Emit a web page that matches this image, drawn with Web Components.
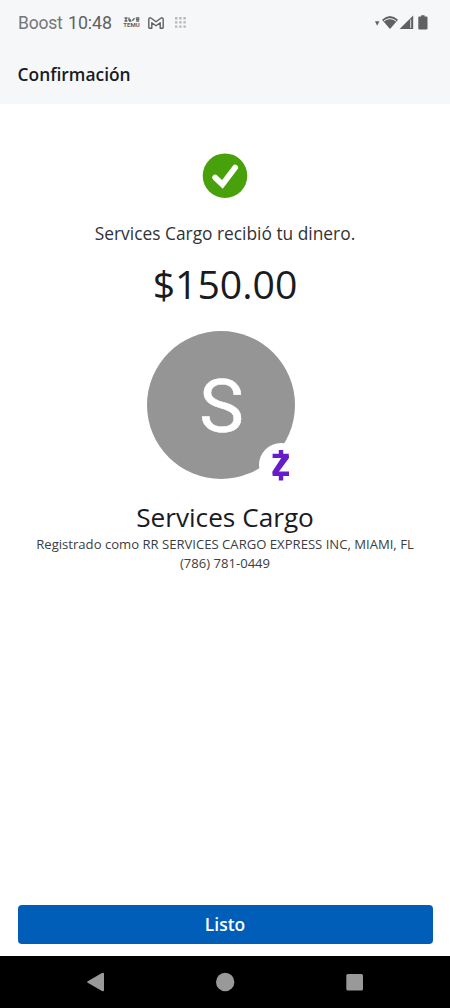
<!DOCTYPE html>
<html lang="es">
<head>
<meta charset="UTF-8">
<meta name="viewport" content="width=device-width, initial-scale=1.0">
<title>Confirmación</title>
<style>
    body {
        margin: 0;
        background: #FFFFFF;
        font-family: "Open Sans", "Noto Sans", sans-serif;
        color: #1A1B1F;
    }
</style>
</head>
<body>
<confirmation-screen></confirmation-screen>

<script>
class StatusBar extends HTMLElement {
    constructor() {
        super();
        this.attachShadow({ mode: 'open' });
    }

    connectedCallback() {
        this.shadowRoot.innerHTML = `
        <style>
            :host {
                display: flex;
                justify-content: space-between;
                align-items: center;
                height: 45px;
                padding: 0 21px 0 18px;
                box-sizing: border-box;
                color: #5F6163;
                font-family: Roboto, sans-serif;
            }
            .left, .right {
                display: flex;
                align-items: center;
            }
            .carrier {
                width: 45px;
                font-size: 17.5px;
                line-height: 22px;
                color: #747678;
                letter-spacing: -0.2px;
            }
            .time {
                width: 44px;
                font-size: 17.8px;
                line-height: 22px;
                margin-left: 5px;
                letter-spacing: -0.1px;
            }
            .temu {
                display: flex;
                flex-direction: column;
                align-items: center;
                width: 17px;
                margin-left: 11px;
            }
            .temu span {
                font-size: 6px;
                line-height: 6px;
                font-weight: 700;
            }
            svg {
                display: block;
                flex-shrink: 0;
            }
            .mail {
                margin-left: 8px;
            }
            .dots {
                margin-left: 11px;
            }
        </style>
        <div class="left">
            <span class="carrier">${this.getAttribute('carrier')}</span>
            <span class="time">${this.getAttribute('time')}</span>
            <div class="temu">
                <svg width="16" height="5" viewBox="0 0 16 5" fill="none" stroke="currentColor" stroke-width="1.3"><path d="M0.5 1h3M2 1v3M.4 4h3M5 .5v2.5h2M5 4.2h2.4M8.2 3.8 10.6 1.2M11.8 1h3.6M12 2.6h3.3M12.2 4.2h3"></path></svg>
                <span>TEMU</span>
            </div>
            <svg class="mail" width="16" height="12" viewBox="0 0 16 12" fill="none" stroke="currentColor" stroke-width="1.4" stroke-linejoin="round"><path d="M.8 10.6V2.2C.8.7 2.3.4 3.3 1.2L8 4.7l4.7-3.5c1-.8 2.5-.5 2.5 1v8.4q0 .7-.7.7h-2.3V5.7L8 8.8 3.8 5.7v5.6H1.5q-.7 0-.7-.7z"></path></svg>
            <svg class="dots" width="11" height="11" viewBox="0 0 11 11" fill="#B7B8BA"><path d="M0 0h2.4v2.4H0zM4.2 0h2.4v2.4H4.2zM8.4 0h2.4v2.4H8.4zM0 4.2h2.4v2.4H0zM4.2 4.2h2.4v2.4H4.2zM8.4 4.2h2.4v2.4H8.4zM0 8.4h2.4v2.4H0zM4.2 8.4h2.4v2.4H4.2zM8.4 8.4h2.4v2.4H8.4z"></path></svg>
        </div>
        <div class="right">
            <svg width="54" height="16" viewBox="0 0 54 16" fill="currentColor">
                <path d="M0 6.2h4.4L2.2 10.8z"></path>
                <path d="M7 4.7Q15 -2.7 23 4.7L15 14z"></path>
                <path d="M8.8 6.1Q15 1.2 21.2 6.1" fill="none" stroke="#F6F7F9" stroke-width="1"></path>
                <path d="M24.6 14 38.2 .6V14z"></path>
                <path d="M35.6 4.6V13" stroke="#C9CBCC" stroke-width="1.2"></path>
                <path d="M46.2.2h3.4V1.6h1.9q1 0 1 1v10.8q0 1-1 1h-7.2q-1 0-1-1V2.6q0-1 1-1h1.9z"></path>
            </svg>
        </div>
        `;
    }
}

class PageHeader extends HTMLElement {
    constructor() {
        super();
        this.attachShadow({ mode: 'open' });
    }

    connectedCallback() {
        this.shadowRoot.innerHTML = `
        <style>
            :host {
                display: block;
                height: 59px;
                padding: 17px 17.5px 0;
                box-sizing: border-box;
                font-size: 17.4px;
                line-height: 24px;
                font-weight: 600;
            }
        </style>
        <slot></slot>
        `;
    }
}

class SuccessIcon extends HTMLElement {
    constructor() {
        super();
        this.attachShadow({ mode: 'open' });
    }

    connectedCallback() {
        this.shadowRoot.innerHTML = `
        <style>
            :host {
                display: block;
                width: 46px;
                height: 46px;
            }
            svg {
                display: block;
            }
        </style>
        <svg width="46" height="46" viewBox="0 0 46 46" fill="none">
            <circle cx="23" cy="22.7" r="22.3" fill="#48A10B"></circle>
            <path d="M13.2 24.6 20.4 31.4 33.2 14.6" stroke="#FFFFFF" stroke-width="5.8" stroke-linecap="round" stroke-linejoin="miter"></path>
        </svg>
        `;
    }
}

class ContactAvatar extends HTMLElement {
    constructor() {
        super();
        this.attachShadow({ mode: 'open' });
    }

    connectedCallback() {
        this.shadowRoot.innerHTML = `
        <style>
            :host {
                display: block;
                position: relative;
                width: 148px;
                height: 148px;
            }
            .circle {
                display: flex;
                align-items: center;
                justify-content: center;
                width: 100%;
                height: 100%;
                padding: 2px 0 0 2px;
                box-sizing: border-box;
                border-radius: 50%;
                background: #959595;
                color: #FFFFFF;
                font-family: Roboto, sans-serif;
                font-size: 75px;
                line-height: 88px;
                -webkit-text-stroke: 0.6px #FFFFFF;
            }
            /* Zelle badge overlaps the lower right edge */
            .badge {
                position: absolute;
                right: -8px;
                bottom: -8px;
                width: 44px;
                height: 44px;
                border-radius: 50%;
                background: #FFFFFF;
            }
            svg {
                display: block;
            }
        </style>
        <div class="circle"><slot></slot></div>
        <div class="badge">
            <svg width="44" height="44" viewBox="0 0 44 44" fill="none" stroke="#671CC9" stroke-width="4.4">
                <path d="M13.6 12.9H29.8M13.6 30.7H30M22 7V13M22 30.7V37.6"></path>
                <path d="M23.6 12.9H29.8V15.2L19.8 28.7V30.9H13.6V28.3z" fill="#671CC9" stroke="none"></path>
            </svg>
        </div>
        `;
    }
}

class PaymentSummary extends HTMLElement {
    constructor() {
        super();
        this.attachShadow({ mode: 'open' });
    }

    connectedCallback() {
        this.shadowRoot.innerHTML = `
        <style>
            :host {
                display: flex;
                flex-direction: column;
                align-items: center;
                flex: 1;
                padding-top: 49px;
                text-align: center;
            }
            .message {
                margin-top: 22px;
                font-size: 17.35px;
                line-height: 24px;
                color: #303236;
            }
            .amount {
                margin-top: 12px;
                font-size: 39.2px;
                line-height: 54px;
            }
            contact-avatar {
                margin: 20px 9px 0 0;
            }
            .name {
                margin-top: 20px;
                font-size: 26.2px;
                line-height: 36px;
            }
            .detail {
                font-size: 13.1px;
                line-height: 19px;
                color: #3B3D41;
                white-space: nowrap;
            }
        </style>
        <success-icon></success-icon>
        <div class="message"><slot name="message"></slot></div>
        <div class="amount"><slot name="amount"></slot></div>
        <contact-avatar>${this.getAttribute('initial')}</contact-avatar>
        <div class="name"><slot name="name"></slot></div>
        <div class="detail"><slot name="registered"></slot></div>
        <div class="detail"><slot name="phone"></slot></div>
        `;
    }
}

class PrimaryButton extends HTMLElement {
    constructor() {
        super();
        this.attachShadow({ mode: 'open' });
    }

    connectedCallback() {
        this.shadowRoot.innerHTML = `
        <style>
            :host {
                display: block;
                margin: 0 17.5px 11.5px;
            }
            button {
                display: block;
                width: 100%;
                height: 39px;
                padding: 0;
                border: none;
                border-radius: 4px;
                background: #005EB8;
                color: #FFFFFF;
                font: 600 17.4px/39px "Open Sans", "Noto Sans", sans-serif;
                cursor: pointer;
            }
        </style>
        <button type="button"><slot></slot></button>
        `;
    }
}

class SystemNav extends HTMLElement {
    constructor() {
        super();
        this.attachShadow({ mode: 'open' });
    }

    connectedCallback() {
        this.shadowRoot.innerHTML = `
        <style>
            :host {
                display: flex;
                justify-content: space-between;
                align-items: center;
                height: 52.5px;
                padding: 0 86px;
                box-sizing: border-box;
                background: #000000;
            }
            svg {
                display: block;
                fill: #999999;
            }
        </style>
        <svg width="19" height="20" viewBox="0 0 19 20"><path d="M1.7 9.2 16 1Q18 0 18 2V18Q18 20 16 19L1.7 10.8Q.5 10 1.7 9.2z"></path></svg>
        <svg width="20" height="20" viewBox="0 0 20 20"><circle cx="10.2" cy="10" r="9.2"></circle></svg>
        <svg width="19" height="20" viewBox="0 0 19 20"><rect x="1.3" y="2" width="16.7" height="16.4" rx="1.5"></rect></svg>
        `;
    }
}

class ConfirmationScreen extends HTMLElement {
    constructor() {
        super();
        this.attachShadow({ mode: 'open' });
    }

    connectedCallback() {
        this.shadowRoot.innerHTML = `
        <style>
            :host {
                display: flex;
                flex-direction: column;
                height: 100vh;
                overflow: hidden;
            }
            .top {
                background: #F6F7F9;
            }
        </style>
        <div class="top">
            <status-bar carrier="Boost" time="10:48"></status-bar>
            <page-header>Confirmación</page-header>
        </div>
        <payment-summary initial="S">
            <span slot="message">Services Cargo recibió tu dinero.</span>
            <span slot="amount">$150.00</span>
            <span slot="name">Services Cargo</span>
            <span slot="registered">Registrado como RR SERVICES CARGO EXPRESS INC, MIAMI, FL</span>
            <span slot="phone">(786) 781-0449</span>
        </payment-summary>
        <primary-button>Listo</primary-button>
        <system-nav></system-nav>
        `;
    }
}

customElements.define('status-bar', StatusBar);
customElements.define('page-header', PageHeader);
customElements.define('success-icon', SuccessIcon);
customElements.define('contact-avatar', ContactAvatar);
customElements.define('payment-summary', PaymentSummary);
customElements.define('primary-button', PrimaryButton);
customElements.define('system-nav', SystemNav);
customElements.define('confirmation-screen', ConfirmationScreen);
</script>
</body>
</html>
